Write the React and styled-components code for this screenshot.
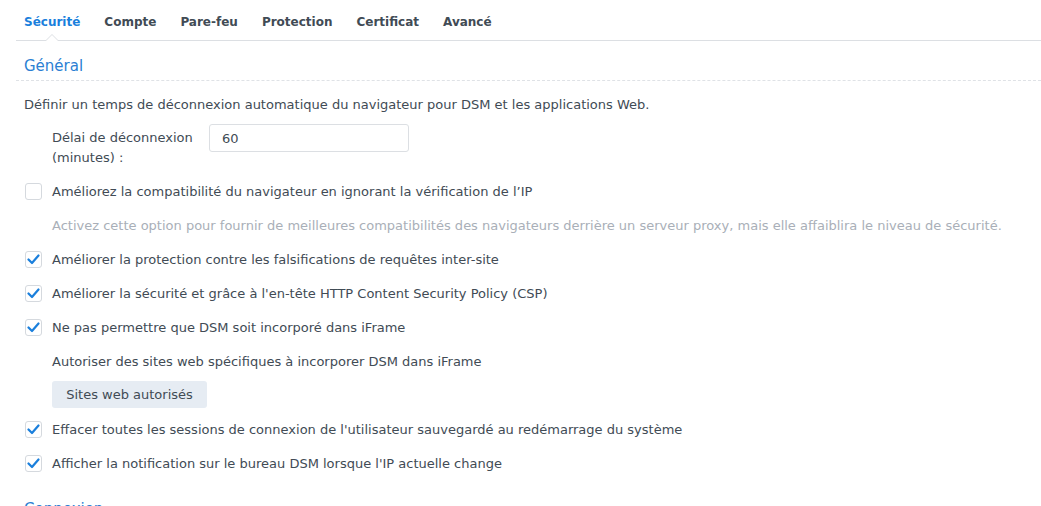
import React from 'react';
import styled, { createGlobalStyle } from 'styled-components';

const GlobalStyle = createGlobalStyle`
    body {
        margin: 0;
        background: #fff;
        font-family: "DejaVu Sans", Verdana, sans-serif;
        color: #414b55;
    }
`;

const tabs = ['Sécurité', 'Compte', 'Pare-feu', 'Protection', 'Certificat', 'Avancé'];

const options = [
    { id: 1, label: "Améliorer la protection contre les falsifications de requêtes inter-site", checked: true },
    { id: 2, label: "Améliorer la sécurité et grâce à l'en-tête HTTP Content Security Policy (CSP)", checked: true },
    { id: 3, label: 'Ne pas permettre que DSM soit incorporé dans iFrame', checked: true },
];

const lastOptions = [
    { id: 4, label: "Effacer toutes les sessions de connexion de l'utilisateur sauvegardé au redémarrage du système", checked: true },
    { id: 5, label: "Afficher la notification sur le bureau DSM lorsque l'IP actuelle change", checked: true },
];

const Check = ({ checked }) => (
    <Box>
        {checked && (
            <svg width="13" height="11" viewBox="0 0 13 11">
                <polyline points="1.5,5.5 5,9 11.5,1.5" fill="none" stroke="#1a7fdc" strokeWidth="2.2" strokeLinecap="round" strokeLinejoin="round" />
            </svg>
        )}
    </Box>
);

const CheckRow = ({ label, checked }) => (
    <Row $check>
        <Check checked={checked} />
        <RowText>{label}</RowText>
    </Row>
);

const App = () => (
    <>
        <GlobalStyle />
        <Page>
            <TabBar>
                {tabs.map((t, i) => (
                    <Tab key={t} $active={i === 0}>{t}</Tab>
                ))}
            </TabBar>
            <SectionTitle>Général</SectionTitle>
            <Body>
                <Row $first>
                    <RowText>Définir un temps de déconnexion automatique du navigateur pour DSM et les applications Web.</RowText>
                </Row>
                <FieldRow>
                    <FieldLabel>Délai de déconnexion<br />(minutes) :</FieldLabel>
                    <Input defaultValue="60" />
                </FieldRow>
                <CheckRow label="Améliorez la compatibilité du navigateur en ignorant la vérification de l’IP" checked={false} />
                <Row>
                    <RowText $muted>Activez cette option pour fournir de meilleures compatibilités des navigateurs derrière un serveur proxy, mais elle affaiblira le niveau de sécurité.</RowText>
                </Row>
                {options.map(o => <CheckRow key={o.id} {...o} />)}
                <Row>
                    <RowText>Autoriser des sites web spécifiques à incorporer DSM dans iFrame</RowText>
                </Row>
                <ButtonRow>
                    <Button>Sites web autorisés</Button>
                </ButtonRow>
                {lastOptions.map(o => <CheckRow key={o.id} {...o} />)}
            </Body>
            <NextTitle>Connexion</NextTitle>
        </Page>
    </>
);

const Page = styled.div`
    height: 506px;
    overflow: hidden;
    padding-left: 16px;
    font-size: 13px;
`;

const TabBar = styled.div`
    display: flex;
    height: 40px;
    align-items: center;
    border-bottom: 1px solid #dcdfe3;
    padding-left: 8px;
    gap: 24px;
`;

const Tab = styled.div`
    position: relative;
    height: 40px;
    line-height: 44px;
    font-weight: bold;
    font-size: 12px;
    color: ${p => (p.$active ? '#1a7fdc' : '#414b55')};

    ${p => p.$active && `
        &::before, &::after {
            content: '';
            position: absolute;
            left: 50%;
            bottom: -1px;
            width: 0;
            height: 0;
            margin-left: -7px;
            border-left: 7px solid transparent;
            border-right: 7px solid transparent;
        }
        &::before {
            border-bottom: 7px solid #dcdfe3;
        }
        &::after {
            bottom: -2px;
            border-bottom: 7px solid #fff;
        }
    `}
`;

const SectionTitle = styled.div`
    height: 39px;
    line-height: 50px;
    padding-left: 8px;
    font-size: 15px;
    color: #2b7fd3;
    border-bottom: 1px dashed #dfe2e6;
`;

const Body = styled.div`
    display: flex;
    flex-direction: column;
    padding-left: 8px;
    padding-top: 6px;
`;

const Row = styled.div`
    display: flex;
    align-items: center;
    height: 34px;
    gap: 10px;
    padding-left: ${p => (p.$first ? '0' : p.$check ? '1px' : '28px')};
`;

const Box = styled.div`
    box-sizing: border-box;
    width: 17px;
    height: 17px;
    border: 1px solid #d5d9de;
    border-radius: 3px;
    background: #fff;
    display: flex;
    align-items: center;
    justify-content: center;
`;

const RowText = styled.span`
    font-size: 13px;
    white-space: nowrap;
    color: ${p => (p.$muted ? '#a9afb8' : '#414b55')};
`;

const FieldRow = styled.div`
    display: flex;
    align-items: flex-start;
    height: 53px;
    padding-left: 28px;
`;

const FieldLabel = styled.div`
    width: 157px;
    padding-top: 7px;
    line-height: 20px;
    font-size: 13px;
`;

const Input = styled.input`
    box-sizing: border-box;
    margin-top: 3px;
    width: 200px;
    height: 28px;
    border: 1px solid #dcdfe3;
    border-radius: 3px;
    padding: 0 12px;
    font-family: inherit;
    font-size: 13px;
    color: #414b55;
    outline: none;
`;

const ButtonRow = styled.div`
    height: 34px;
    padding-left: 28px;
    padding-top: 3px;
    box-sizing: border-box;
`;

const Button = styled.button`
    height: 27px;
    width: 155px;
    border: none;
    border-radius: 3px;
    background: #e6ecf3;
    color: #414b55;
    font-family: inherit;
    font-size: 13px;
    padding: 0;
`;

const NextTitle = styled.div`
    margin-top: 20px;
    padding-left: 8px;
    font-size: 15px;
    color: #2b7fd3;
`;

export default App;
